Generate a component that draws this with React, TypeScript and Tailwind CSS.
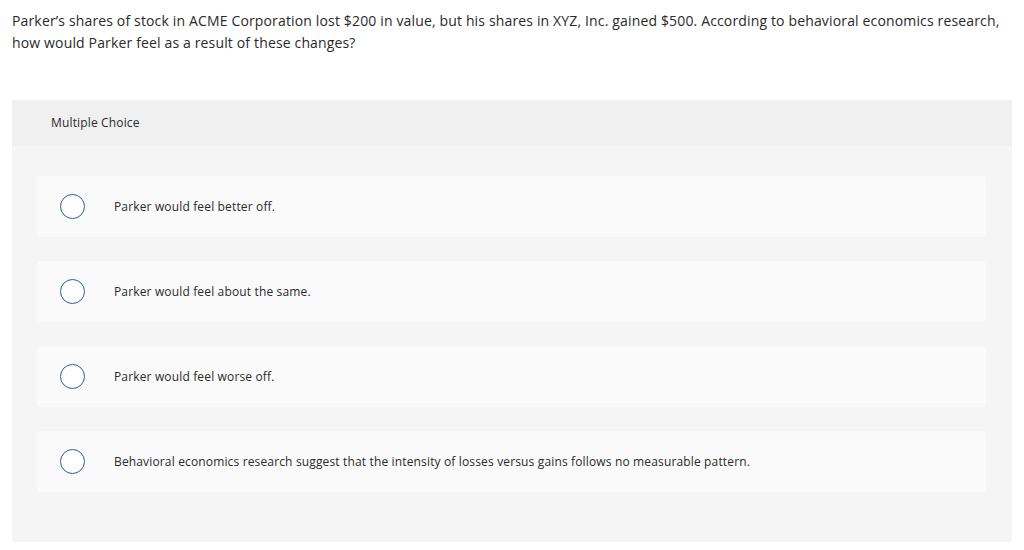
import React from 'react';

const options = [
  'Parker would feel better off.',
  'Parker would feel about the same.',
  'Parker would feel worse off.',
  'Behavioral economics research suggest that the intensity of losses versus gains follows no measurable pattern.',
];

export default function App() {
  return (
    <div className="w-[1024px] h-[550px] bg-white text-[#2a2a2a] font-['Open_Sans','Liberation_Sans',sans-serif] tracking-[0.15px] overflow-hidden">
      <div className="px-3 pt-[10px]">
        <p className="text-[14px] leading-[22px] w-[1000px]">
          Parker’s shares of stock in ACME Corporation lost $200 in value, but his shares in XYZ, Inc. gained $500. According to behavioral economics research, how would Parker feel as a result of these changes?
        </p>
      </div>

      <div className="mx-3 mt-[46px] w-[1000px] h-[442px] rounded-b bg-[#f5f5f5]">
        <div className="h-[46px] bg-[#f0f0f0] flex items-center pl-[39px] text-[12px]">
          Multiple Choice
        </div>
        <div className="flex flex-col gap-[24px] pt-[30px] pl-[25px] pr-[26px]">
          {options.map((opt, i) => (
            <div key={i} className="h-[61px] rounded bg-[#fafafa] flex items-center">
              <div className="ml-[23px] w-[25px] h-[25px] rounded-full border-[1.5px] border-[#2c5e96] bg-white shrink-0" />
              <span className="ml-[29px] text-[12px]">{opt}</span>
            </div>
          ))}
        </div>
      </div>
    </div>
  );
}
